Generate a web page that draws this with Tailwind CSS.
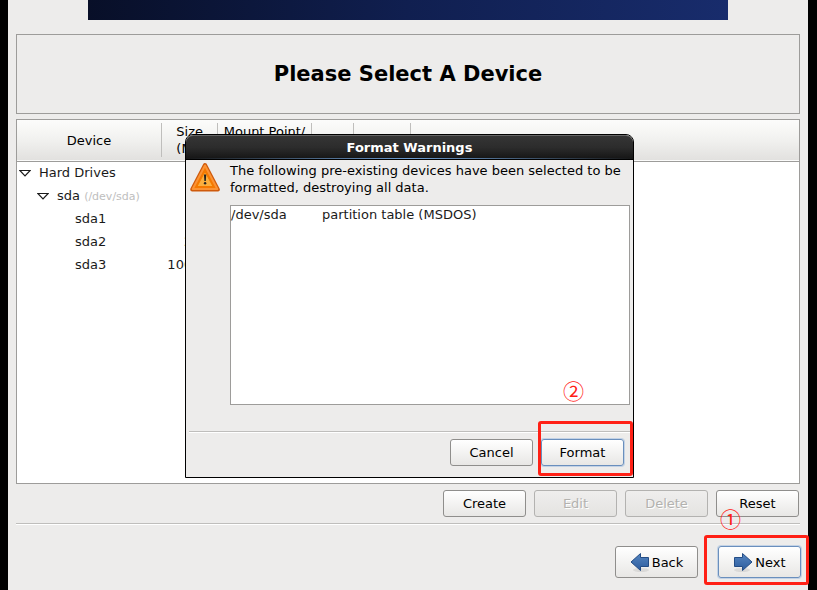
<!DOCTYPE html>
<html lang="en">
<head>
	<title>Please Select A Device</title>
	<meta charset="UTF-8"/>
	<meta name="viewport" content="width=device-width, initial-scale=1.0"/>
	<script src="https://cdn.jsdelivr.net/npm/@tailwindcss/browser@4"></script>
</head>
<body class="bg-black font-['DejaVu_Sans',sans-serif] text-[13px] leading-[17px] text-[#1a1a1a]">
	<div class="relative ml-2 mr-[9px] flex min-h-screen flex-col bg-[#edeceb] pb-3">
		<!-- Banner -->
		<div class="mx-20 h-5 bg-linear-to-r from-[#080f28] via-[#101f50] to-[#182c6c]"></div>

		<div class="mx-2 mt-[14px] flex h-20 items-center justify-center border border-[#9d9c9a]">
			<h1 class="text-[21px] leading-6 font-bold text-black">Please Select A Device</h1>
		</div>

		<!-- Device tree -->
		<div class="mx-2 mt-[5px] flex-1 border border-[#9d9c9a] bg-white">
			<table class="w-full table-fixed border-collapse">
				<colgroup>
					<col class="w-[145px]"><col class="w-[56px]"><col class="w-[94px]"><col class="w-[42px]"><col class="w-[57px]"><col>
				</colgroup>
				<thead class="text-black">
					<tr class="h-[41px] border-b border-[#9d9c9a] bg-linear-to-b from-[#fcfcfb] from-0% via-[#f1f1ef] via-50% to-[#e2e1df]">
						<th class="p-0 font-normal"><div class="flex h-[34px] items-center justify-center border-r border-[#bfbebc]">Device</div></th>
						<th class="p-0 font-normal"><div class="flex h-[34px] items-center justify-center border-r border-[#bfbebc] pl-1"><span class="text-left">Size<br>(MB)</span></div></th>
						<th class="p-0 font-normal"><div class="flex h-[34px] items-center justify-center border-r border-[#bfbebc]"><span class="text-left whitespace-nowrap">Mount Point/<br>Volume</span></div></th>
						<th class="p-0"><div class="h-[34px] border-r border-[#bfbebc]"></div></th>
						<th class="p-0"><div class="h-[34px] border-r border-[#bfbebc]"></div></th>
						<th class="p-0"></th>
					</tr>
				</thead>
				<tbody>
					<tr class="h-[23px]">
						<td class="p-0 pl-[2px]">
							<div class="flex items-center gap-2">
								<svg class="h-3 w-3" viewBox="0 0 12 12" fill="none" stroke="#1a1a1a" stroke-width="1.2"><path d="M.8 3.5h10.400L6 8.800z"/></svg>
								Hard Drives
							</div>
						</td>
						<td></td><td></td><td></td><td></td><td></td>
					</tr>
					<tr class="h-[23px]">
						<td class="p-0 pl-5">
							<div class="flex items-center gap-2 whitespace-nowrap">
								<svg class="h-3 w-3" viewBox="0 0 12 12" fill="none" stroke="#1a1a1a" stroke-width="1.2"><path d="M.8 3.5h10.400L6 8.800z"/></svg>
								<span>sda <span class="text-[11px] text-[#bebebe]">(/dev/sda)</span></span>
							</div>
						</td>
						<td></td><td></td><td></td><td></td><td></td>
					</tr>
					<tr class="h-[23px]"><td class="p-0 pl-[58px]">sda1</td><td class="p-0 pr-px text-right">500</td><td></td><td></td><td></td><td></td></tr>
					<tr class="h-[23px]"><td class="p-0 pl-[58px]">sda2</td><td class="p-0 pr-px text-right">2048</td><td></td><td></td><td></td><td></td></tr>
					<tr class="h-[23px]"><td class="p-0 pl-[58px]">sda3</td><td class="p-0 pr-px text-right">100000</td><td></td><td></td><td></td><td></td></tr>
				</tbody>
			</table>
		</div>

		<div class="mr-[9px] mt-[6px] flex justify-end gap-2">
			<button class="h-[27px] w-[83px] rounded-[3px] border border-[#8f8e8c] bg-linear-to-b from-white to-[#e8e7e5] text-black">Create</button>
			<button disabled class="h-[27px] w-[83px] rounded-[3px] border border-[#b3b2b0] bg-linear-to-b from-[#efeeed] to-[#e4e3e1] text-[#b3b2af] text-shadow-[1px_1px_0_#fff]">Edit</button>
			<button disabled class="h-[27px] w-[83px] rounded-[3px] border border-[#b3b2b0] bg-linear-to-b from-[#efeeed] to-[#e4e3e1] text-[#b3b2af] text-shadow-[1px_1px_0_#fff]">Delete</button>
			<button class="h-[27px] w-[83px] rounded-[3px] border border-[#8f8e8c] bg-linear-to-b from-white to-[#e8e7e5] text-black">Reset</button>
		</div>

		<div class="mx-2 mt-[6px] h-[2px] border-t border-[#bfbebc] bg-white"></div>

		<div class="mr-[7px] mt-[21px] flex justify-end gap-5">
			<button class="flex h-8 w-[83px] items-center justify-center gap-[2px] rounded-[3px] border border-[#8f8e8c] bg-linear-to-b from-white to-[#e8e7e5] text-black">
				<svg class="h-5 w-5" viewBox="0 0 20 20"><defs><linearGradient id="blue" x1="0" y1="0" x2="0" y2="1"><stop offset="0" stop-color="#5585c0"/><stop offset="1" stop-color="#2c5c9e"/></linearGradient></defs><ellipse cx="11" cy="18" rx="8" ry="2" fill="#000" opacity=".08"/><path d="M1 10 10.500 1.500V5.500H18.500V14.500H10.500V18.500Z" fill="url(#blue)" stroke="#234c85"/></svg>
				Back
			</button>
			<div class="relative">
				<button class="flex h-8 w-[83px] items-center justify-center gap-[2px] rounded-[3px] border border-[#6a8fbd] bg-linear-to-b from-white to-[#e8e7e5] text-black shadow-[0_0_0_1px_#c3d2e5]">
					<svg class="h-5 w-5" viewBox="0 0 20 20"><ellipse cx="9" cy="18" rx="8" ry="2" fill="#000" opacity=".08"/><path d="M19 10 9.500 1.500V5.500H1.500V14.500H9.500V18.500Z" fill="url(#blue)" stroke="#234c85"/></svg>
					Next
				</button>
				<div class="pointer-events-none absolute -top-[11px] -right-2 -bottom-[7px] -left-[14px] rounded-[3px] border-3 border-[#ff2015]"></div>
				<span class="absolute -top-[38px] left-[2px] font-['Noto_Sans_CJK_SC',sans-serif] text-[21px] leading-5 text-[#ff2015]">①</span>
			</div>
		</div>

		<!-- Format Warnings window -->
		<div role="dialog" aria-labelledby="dialogTitle" class="absolute top-[134px] left-[177px] w-[449px] rounded-t-lg border border-black bg-[#edeceb] text-black">
			<div class="flex h-[25px] items-center justify-center rounded-t-[7px] border-t border-b border-t-[#666] border-b-black bg-linear-to-b from-[#353535] via-[#2c2c2c] to-[#151515]">
				<h2 id="dialogTitle" class="font-bold text-white">Format Warnings</h2>
			</div>
			<div class="-mt-[2px] mb-px h-px bg-linear-to-r from-transparent via-[#6f9fd4] to-transparent"></div>

			<div class="flex gap-[10px] pt-[2px] pr-[3px] pl-1">
				<svg class="h-[30px] w-[30px] shrink-0" viewBox="0 0 30 30"><path d="M15 3 27.800 27.500H2.200Z" fill="#cf5a0c" stroke="#cf5a0c" stroke-width="4" stroke-linejoin="round"/><path d="M15 3.500 27.300 27H2.700Z" fill="#f57900" stroke="#fb9335" stroke-width="2" stroke-linejoin="round"/><path d="M15 9.500 23 24.500H7Z" fill="#fcaf3e" stroke="#f57900" stroke-width="1"/><path d="M14 12.500h2.200l-.4 6.500h-1.400z" fill="#222"/><circle cx="15.100" cy="21.300" r="1.200" fill="#222"/></svg>
				<div class="flex-1">
					<p>The following pre-existing devices have been selected to be formatted, destroying all data.</p>
					<div class="mt-[9px] h-[200px] border border-[#9d9c9a] bg-white text-[#1a1a1a]">
						<table>
							<tr>
								<td class="w-[91px] p-0">/dev/sda</td>
								<td class="p-0">partition table (MSDOS)</td>
							</tr>
						</table>
					</div>
				</div>
			</div>

			<div class="mx-[3px] mt-[26px] h-[2px] border-t border-[#bfbebc] bg-white"></div>

			<div class="mt-[6px] mr-[9px] mb-[11px] flex justify-end gap-2">
				<button class="h-[27px] w-[83px] rounded-[3px] border border-[#8f8e8c] bg-linear-to-b from-white to-[#e8e7e5]">Cancel</button>
				<div class="relative">
					<button class="block h-[27px] w-[83px] rounded-[3px] border border-[#6a8fbd] bg-linear-to-b from-white to-[#e8e7e5] shadow-[0_0_0_1px_#c3d2e5]">Format</button>
					<div class="pointer-events-none absolute -top-[18px] -right-[9px] -bottom-[10px] -left-[3px] rounded-[3px] border-3 border-[#ff2015]"></div>
					<span class="absolute -top-[59px] left-[22px] font-['Noto_Sans_CJK_SC',sans-serif] text-[21px] leading-5 text-[#ff2015]">②</span>
				</div>
			</div>
		</div>
	</div>
</body>
</html>
